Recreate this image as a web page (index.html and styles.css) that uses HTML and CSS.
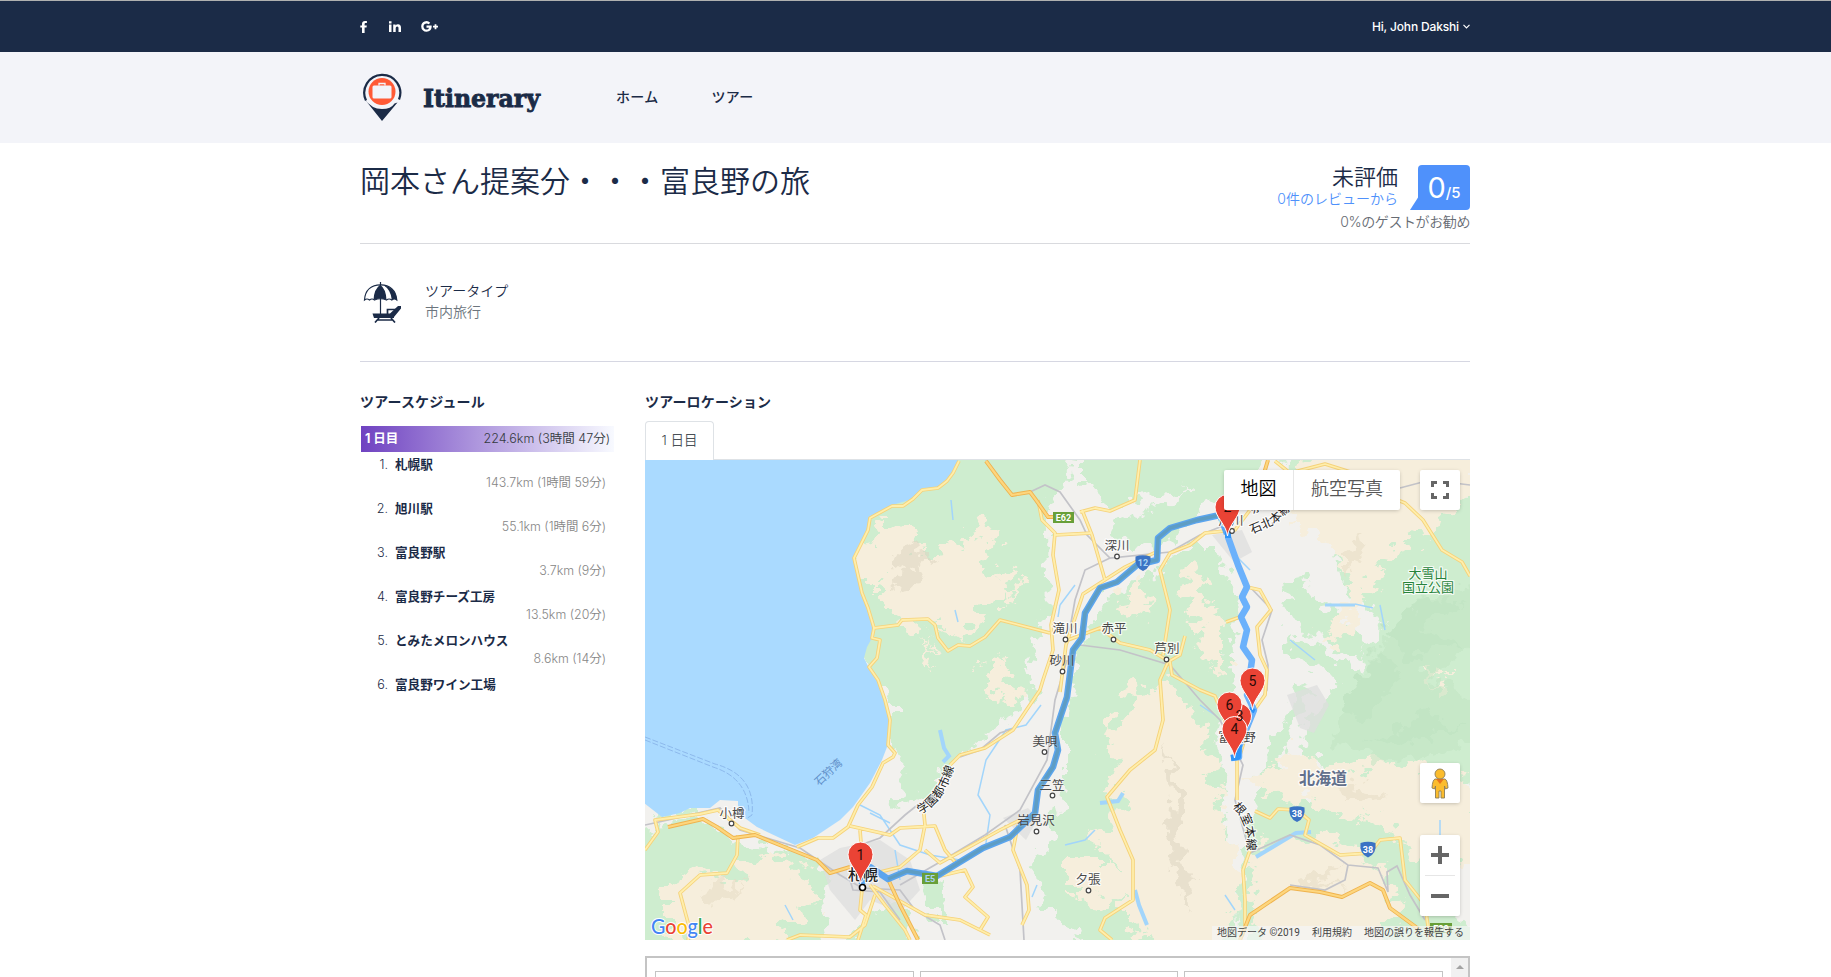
FILE: index.html
```html
<!DOCTYPE html>
<html lang="ja">
<head>
<meta charset="utf-8">
<title>Itinerary</title>
<link rel="stylesheet" href="styles.css">
</head>
<body>
<div class="topbar">
  <div class="container topbar-in">
    <div class="social">
      <svg width="8" height="12" viewBox="0 0 8 12"><path d="M2 12V6.600H.3V4.400H2V3C2 1.100 3.100 0 5 0h1.900v2.100H5.700c-.8 0-1.100.4-1.100 1.100v1.200h2.200l-.3 2.200H4.600V12z"/></svg>
      <svg width="12" height="11" viewBox="0 0 12 11"><path d="M0 3.500h2.500V11H0zM0 .2h2.500v2.200H0zM4.200 3.500h2.400v1c.5-.8 1.300-1.200 2.400-1.200 2.100 0 3 1.300 3 3.500V11H9.500V7.200c0-1.100-.3-1.800-1.300-1.800s-1.500.8-1.500 1.900V11H4.200z"/></svg>
      <svg width="18" height="11" viewBox="0 0 18 11"><path d="M5.500 4.600h5.100c.5 3.400-1.500 6.200-5 6.200A5.300 5.300 0 0 1 .2 5.500 5.300 5.300 0 0 1 9.200 1.700L7.700 3.200C5.800 1.500 2.500 2.600 2.500 5.500c0 3.500 4.700 4.200 5.600 1.200H5.500zM13.600 3.200h1.800v1.600H17v1.800h-1.600v1.600h-1.800V6.600H12V4.800h1.600z"/></svg>
    </div>
    <div class="user">Hi, John Dakshi <svg width="7" height="5" viewBox="0 0 7 5"><path d="M.5.8l3 3 3-3" fill="none" stroke="#fff" stroke-width="1.200"/></svg></div>
  </div>
</div>
<header class="header">
  <div class="container header-in">
    <svg class="pin" width="40" height="48" viewBox="0 0 40 48">
      <path d="M4 27.500A18 18 0 1 1 37 26.500" fill="none" stroke="#1b2b47" stroke-width="2.200"/>
      <path d="M2.500 26q7 10 17.500 10 9 0 12.500-5.500l3-1L20 48z" fill="#1b2b47"/>
      <circle cx="20" cy="18.500" r="13.500" fill="#ff5a36"/>
      <rect x="10.500" y="12.500" width="19" height="13" rx="1.500" fill="#f3f4f9"/>
      <path d="M17 12.500v-2h6v2" fill="none" stroke="#f3f4f9" stroke-width="1.300"/>
    </svg>
    <svg class="brand" width="126" height="50" viewBox="0 0 126 50"><text x="1" y="30" textLength="117" lengthAdjust="spacingAndGlyphs">Itinerary</text></svg>
    <nav class="nav"><a>ホーム</a><a>ツアー</a></nav>
  </div>
</header>
<main class="container">
  <section class="titlebar">
    <h1>岡本さん提案分・・・富良野の旅</h1>
    <div class="rating">
      <div class="rating-row">
        <div class="rating-text"><div class="grade">未評価</div><div class="reviews">0件のレビューから</div></div>
        <div class="score"><svg class="tail" width="9" height="14" viewBox="0 0 9 14"><path d="M9 0L0 14h9z" fill="#4f91fb"/></svg><span class="big">0</span><span class="small">/5</span></div>
      </div>
      <div class="recommend">0%のゲストがお勧め</div>
    </div>
  </section>
  <section class="kind">
    <svg width="40" height="41" viewBox="0 0 40 41">
      <path d="M1.500 18C2 8 8.500 3 17.500 2.800S33 8 33.800 18q-2.500-2-5 0-2.800-2-5.300 0-6-2.500-12 0-2.500-2-5 0-2.500-2-5 0z" fill="#fff" stroke="#1b2b47" stroke-width="1.200"/>
      <path d="M10.500 18Q11 7 17 3v13.500q-3 0-6.500 1.500zM17.500 3q5.500 4 6 15-3-1.500-6-1.500zM21 3.500q12 2.500 12.800 14.500-2.500-2-5 0Q28 8 21 3.500z" fill="#1b2b47"/>
      <path d="M17.500 0v33" stroke="#1b2b47" stroke-width="1.200"/>
      <path d="M9.500 31.500h17.500L35 24h3v2.500L31 35v1H11z" fill="#1b2b47"/>
      <path d="M24.500 32v-4.500H34M16 36l-4 4.500M28 36l4 4.500M14 38h16" fill="none" stroke="#1b2b47" stroke-width="1.700"/>
    </svg>
    <div><div class="kind-name">ツアータイプ</div><div class="kind-value">市内旅行</div></div>
  </section>
  <div class="columns">
    <aside class="schedule">
      <h2>ツアースケジュール</h2>
      <div class="day"><b>1 日目</b><span>224.6km (3時間 47分)</span></div>
      <ol class="stops">
        <li><i>1.</i><b>札幌駅</b><span>143.7km (1時間 59分)</span></li>
        <li><i>2.</i><b>旭川駅</b><span>55.1km (1時間 6分)</span></li>
        <li><i>3.</i><b>富良野駅</b><span>3.7km (9分)</span></li>
        <li><i>4.</i><b>富良野チーズ工房</b><span>13.5km (20分)</span></li>
        <li><i>5.</i><b>とみたメロンハウス</b><span>8.6km (14分)</span></li>
        <li><i>6.</i><b>富良野ワイン工場</b></li>
      </ol>
    </aside>
    <section class="location">
      <h2>ツアーロケーション</h2>
      <div class="tabs"><div class="tab">1 日目</div></div>
      <div class="map">
<svg class="canvas" width="825" height="480" viewBox="645 460 825 480">
  <defs>
    <filter id="rough" x="-5%" y="-5%" width="110%" height="110%"><feTurbulence type="fractalNoise" baseFrequency=".07" numOctaves="3" seed="4"/><feDisplacementMap in="SourceGraphic" scale="30" xChannelSelector="R" yChannelSelector="G"/></filter>
    <filter id="rough2" x="-5%" y="-5%" width="110%" height="110%"><feTurbulence type="fractalNoise" baseFrequency=".05 .07" numOctaves="4" seed="9"/><feDisplacementMap in="SourceGraphic" scale="50" xChannelSelector="R" yChannelSelector="G"/></filter>
    <path id="marker" d="M0 29C-1.500 17-12.500 10-12.500 0a12.500 12.500 0 0 1 25 0C12.500 10 1.500 17 0 29z"/>
    <path id="shield" d="M-7.500-6.500Q0-9 7.500-6.500Q9 4 0 8Q-9 4-7.500-6.500z"/>
    <path id="gakuen" d="M920 814Q944 803 954 767"/>
    <path id="nemuro" d="M1232 807Q1248 820 1247 850"/>
    <path id="sekihoku" d="M1252 534L1275 524L1297 503"/>
    <path id="roads" d="M959 461L953 473 947 481 938 488 922 490 913 499 903 506 892 506 870 518 868 530 854 558 862 593 868 608 874 628 872 638 880 640 877 658 869 667 878 680 885 700 890 720 888 745 895 753 893 757 883 763 872 787 858 805 848 827 833 838 818 838 797 847M874 628L898 625 902 620 928 619 935 625 938 638 948 651 958 645 970 646 985 637 1000 620 1050 633M1038 500L1042 520 1055 533 1053 555 1059 590 1051 625 1053 650 1043 680 1040 690 1013 730 985 748 960 755 950 765M1055 535L1092 533M1140 460L1135 500 1110 511 1095 508 1080 512M1082 510L1092 535 1105 580M1060 692L1066 645 1083 594 1125 567 1160 550M1068 640L1100 628 1120 643 1150 650 1170 662 1172 675 1200 690 1215 696 1237 750 1237 800M1168 662L1160 680 1163 720 1155 750 1130 770 1107 797 1120 830 1133 860 1133 900 1105 918 1100 930 1112 940M1185 636L1180 655 1168 662M1255 811L1270 818 1278 809 1297 810 1309 820 1305 835 1340 855 1370 853 1380 840 1400 838 1405 880 1425 905 1430 940M1250 850L1243 870 1245 900 1245 930M1247 587L1260 590 1271 610 1257 627 1260 655 1267 670 1265 695 1253 712 1240 755M1275 461L1290 473 1325 464 1360 475 1395 478M1385 495L1405 503 1423 520 1442 550 1462 562 1470 576M1163 655L1170 610 1160 570 1170 553 1190 545 1205 533 1235 530 1250 510 1240 500M1226 622L1240 617M645 850L658 832 655 820 700 814 718 810 740 828 760 835M738 835L737 855 727 873 700 875 680 893 690 930 688 940M862 890L860 910 866 915 858 940M875 895L865 925 850 937 800 935 787 940M870 885L885 905 905 930 910 940M850 826L890 835 900 828 935 826 945 850 955 862M860 830L862 855M923 805L925 825 920 850 900 867 880 872M940 876L965 870 973 887 965 897 988 917 980 930M873 886L925 915 960 920 990 935M925 850L940 863 1000 830 1020 820M1018 825L1013 850 1027 885 1029 910 1022 925"/>
    <path id="major" d="M986 461L1000 480 1012 495 1030 492 1036 500 1048 517 1056 517M668 827L703 819 717 827 733 838 755 835 787 848 817 860 830 873 850 867M888 879L900 905 918 940M1240 940L1250 915 1290 888 1320 892 1342 897 1370 883 1383 890 1390 908 1420 930M1262 480L1268 460"/>
  </defs>
  <rect x="645" y="460" width="825" height="480" fill="#f2f1ee"/>
  <g fill="#ceedcf" filter="url(#rough)">
    <path d="M940 440H1075L1068 485 1045 500 1048 615 1030 652 1025 680 1037 690 1015 712 985 738 950 765 925 800 898 805 905 765 895 745 895 700 860 660 868 610 845 557 865 510z"/>
    <path d="M1080 445h120l-20 45-70 15-30-25zM1195 440h75l-15 35-45 30-35 10z"/>
    <path d="M1075 665L1085 640 1103 600 1120 590 1160 570 1185 545 1215 545 1240 600 1230 650 1235 700 1215 740 1225 800 1228 850 1240 960H1120L1070 930 1045 900 1050 840 1065 780 1065 725z"/>
    <path d="M1110 525l60-20 30 5-40 40-40-5zM1120 600l25-5-10 25z"/>
    <path d="M1278 585l25-5 20 25 50 40-10 15-60-30zM1285 632l75 40-15 12-55-30zM1330 520l60-20 90-10v180l-80-30-60-60z"/>
    <path d="M1320 700l40-30 20-40 100-80v230l-90 30-60-20-30-50zM1265 750l25-35 5-30 15 5-25 60-10 50-15 10z"/>
    <path d="M1255 795h70l45-20 110 20v60l-60 30 70 60v20h-230l-25-50 10-60z"/>
    <path d="M640 830l60-10 40 25 60 5 30 20-10 30 10 60H640zM648 810l60 0-20 10zM873 910l25-10 20 50h-80zM920 880l25-5 2 40-20 0zM1035 860l15-10 10 60-15-5z"/>
    <path d="M1280 450h60l20 30-50 30z"/>
  </g>
  <g fill="#f6eedc" filter="url(#rough2)">
    <path d="M878 520l22 0 12 12 6 20 20 0 25-5 15-25 8-4 12 15-10 20-5 20 25 10-5 20-25 12-8 25-22-15-30 5-25-10-15-12 5-25-20 0-22-15 12-18 18-5z"/>
    <path d="M943 600l14 5 3 30-12-10zM985 655l25 5 8 50-15-5-20-25zM925 640l10 20-5 5zM1000 585l18-8 8 10-15 8z"/>
    <path d="M665 885l30-15 35 10 40-30 30 20 25 30-25 20-40 25-60 5-35-20z"/>
    <path d="M1120 590l25-5 5 25-25 5zM1180 570l20 5 25 60 0 45-20-20-15-50z"/>
    <path d="M1130 690l30-10 25 15 25 45 15 90 15 60-15 70h-60l-40-50 0-40-30-30 25-40-10-50z"/>
    <path d="M1075 860l35 0 25 30-30 15-30-5z"/>
    <path d="M1305 440h180v45l-40 30-40 25-35 50-20 40-20 15-8-20 30-20-10-50-50-35z"/>
    <path d="M1295 750l45 20 50-10 90 20v80l-50 10-50-50-50-10-80-20zM1255 845l65-10 60 25 20 50-30 50-100 0-20-50zM1430 665l15 0-10 35z"/>
  </g>
  <g filter="url(#rough)" opacity=".55">
    <path d="M895 555l25-18-5 22 28-5-30 15 5 15-30 5 15-18zM1165 740l18 60-5 40 14 50-5 20-20-60 5-50z" fill="#ddd5c1"/>
    <path d="M700 890l25-15-5 15 30-5-35 20zM1310 870l35-5-30 15 35 5-50 5zM1330 780l60 15-40 5zM1345 555l15-25 5 25-20 25z" fill="#e6dcc5"/>
    <path d="M1330 740l40-80 50-60 60-20v60l-60 40 60 20v40l-90 25z" fill="#c2e5c4"/>
    <path d="M1340 710l40-60 20 20-30 50zM1385 630l45-35 35 10-50 20 50 20-60 15zM1370 740l60-30 30 20-60 15z" fill="#b9dfbc"/>
  </g>
  <g fill="#dedede">
    <path d="M820 860l20-12 40-8 30 20 10 30-20 22-30-12-15 20-25-30zM1212 535l30-5 10 22-18 10zM1287 695l30-10 12 20-15 28-14-5zM1003 818l25-10 10 10-12 22z" opacity=".75"/>
  </g>
  <path d="M640 455H960L953 475 947 482 938 487 922 489 913 499 892 505 870 517 868 527 853 557 862 593 868 610 873 620 874 628 872 638 867 647 864 658 870 670 877 680 885 697 890 717 887 747 882 760 870 783 853 807 840 820 813 838 795 845 780 838 757 827 738 813 738 801 720 800 710 808 690 808 680 813 662 817 640 800z" fill="#aadaff"/>
  <g fill="none" stroke="#8db9ec" stroke-width="1" stroke-dasharray="6 2"><path d="M645 737L715 764Q756 775 752 815L746 819M645 740L713 767Q748 778 749 813"/></g>
  <g fill="none" stroke="#a2d5fb" stroke-width="1.500">
    <path d="M940 730l4 18 5 8-6 6" stroke-width="4"/>
    <path d="M860 805L880 815 900 845 930 855 960 860M870 813l20 10M985 850l5-35-12-20 8-35 20-30 20-5 15-20M955 610l3 12M951 500l2 20M895 850l5 30M785 905l8 15M1060 605l15-20M1060 605l-2 12M1037 885l-5 12"/>
    <path d="M1100 803l18-2 5-8M1256 857l20-12 20-12 15-1M1135 890l4 15 8 20" stroke-width="4"/>
    <path d="M1325 605l30 0" stroke-width="3"/>
    <path d="M1355 604l18 4M1380 605l5 25M1440 850v-30M1065 845l20-5 10-10M1230 550l20 20M1200 705l15 10M1290 640l25 20M1225 895l10 15"/>
  </g>
  <g fill="none" stroke="#c3c3c8" stroke-width="1.700">
    <path d="M645 825L668 820 720 808 740 830 800 848 840 875 862 888 900 890 915 910 940 925 945 940M860 845L880 838 905 815 920 803M960 757L980 750 1000 733 1015 728 1040 690M1067 660L1055 700 1047 760 1020 810 985 835 940 862 900 885M1005 825L1020 870 1024 940M850 880L853 890 880 892 900 920"/>
    <path d="M986 460L1000 478 1012 494 1030 492 1045 485 1060 492 1080 520 1087 535 1110 558 1170 552 1200 535 1225 525M1110 558L1085 570 1075 600 1068 640M1080 645L1120 650 1170 665 1200 700 1220 720 1243 765 1235 800 1250 853 1290 835 1320 845 1348 865 1345 880 1325 890 1290 885M1348 865L1378 868 1388 892 1387 872 1397 866 1410 895 1425 920M1250 587L1272 610 1262 640 1268 665 1267 690 1245 725M1400 488L1430 480 1470 485"/>
  </g>
  <g fill="none" stroke-linejoin="round">
    <use href="#roads" stroke="#f5d27a" stroke-width="3.600"/>
    <use href="#roads" stroke="#ffeeab" stroke-width="1.800"/>
    <use href="#major" stroke="#efb34e" stroke-width="4"/>
    <use href="#major" stroke="#fdd67e" stroke-width="2.200"/>
  </g>
  <g fill="none" stroke-linejoin="round">
    <path d="M862 884L862 876 870 867 888 879 907 871 937 876 955 865 983 848 1010 837 1035 813 1038 790 1053 767 1058 750 1055 733 1067 697 1073 650 1082 638 1085 613 1100 588 1117 582 1137 565 1157 560 1158 538 1170 528 1197 520 1220 515 1227 534" stroke="#5ba5ee" stroke-width="6.500"/>
    <path d="M888 879L907 871 937 876 955 865 983 848 1010 837 1035 813 1038 790 1053 767 1058 750 1055 733 1067 697 1073 650 1082 638 1085 613 1100 588 1117 582 1137 565 1157 560 1158 538 1170 528 1197 520 1220 515" stroke="#5e9dc4" stroke-width="3.500"/>
    <path d="M1228 537L1238 565 1247 587 1242 597 1247 607 1241 617 1247 630 1243 647 1252 660 1247 695 1254 710 1239 747 1239 757 1231 758" stroke="#6bb1fb" stroke-width="6.500"/>
    <path d="M1239 745L1238 757 1231 758M1251 712L1253 708M1228 532V538" stroke="#2f94f8" stroke-width="6"/>
  </g>
  <g class="signs">
    <rect x="1053" y="512" width="21" height="11"/><text x="1063.500" y="521">E62</text>
    <rect x="922" y="873" width="16" height="11"/><text x="930" y="882" class="dim">E5</text>
    <rect x="1430" y="923" width="22" height="10"/><text x="1441" y="932">E38</text>
    <use href="#shield" x="1143" y="563"/><text x="1143" y="566" class="dim">12</text>
    <use href="#shield" x="1297" y="814"/><text x="1297" y="817">38</text>
    <use href="#shield" x="1368" y="849.500"/><text x="1368" y="852.500">38</text>
  </g>
  <g class="towns">
    <text x="1117" y="550">深川</text><text x="1065" y="633">滝川</text><text x="1062" y="665" class="under">砂川</text><text x="1114" y="633">赤平</text><text x="1167" y="653">芦別</text>
    <text x="1045" y="746" class="under">美唄</text><text x="1052" y="790" class="under">三笠</text><text x="1036" y="825" class="under">岩見沢</text><text x="1088" y="884">夕張</text><text x="732" y="818">小樽</text>
    <text x="1231" y="525">旭川</text><text x="1237" y="742">富良野</text><text x="863" y="880" class="city">札幌</text>
    <text x="1323" y="784" class="pref">北海道</text>
    <text x="1428" y="578" class="park">大雪山</text><text x="1428" y="591.500" class="park">国立公園</text>
    <text x="0" y="0" class="bay" transform="translate(831 775) rotate(-43)">石狩湾</text>
    <text class="rail"><textPath href="#gakuen" startOffset="0">学園都市線</textPath></text>
    <text class="rail"><textPath href="#nemuro" startOffset="0">根室本線</textPath></text>
    <text class="rail"><textPath href="#sekihoku" startOffset="0">石北本線</textPath></text>
    <text x="1253" y="514" class="rail" transform="rotate(-30 1253 514)">宗谷</text>
  </g>
  <g fill="#fff" stroke="#444" stroke-width="1.200"><circle cx="1117" cy="556.500" r="2.300"/><circle cx="1065.500" cy="639.500" r="2.300"/><circle cx="1062.500" cy="671.500" r="2.300"/><circle cx="1113.500" cy="639.500" r="2.300"/><circle cx="1166.500" cy="659.500" r="2.300"/><circle cx="1044.500" cy="752" r="2.300"/><circle cx="1052.500" cy="795.500" r="2.300"/><circle cx="1036.500" cy="831.500" r="2.300"/><circle cx="1088.500" cy="890.500" r="2.300"/><circle cx="731.500" cy="823.500" r="2.300"/><circle cx="1232" cy="531" r="2.300"/><circle cx="862.500" cy="887.500" r="3" stroke="#000" stroke-width="1.600"/></g>
  <g class="markers">
    <use href="#marker" x="860.500" y="854.500"/><text x="860.500" y="860">1</text>
    <use href="#marker" x="1227.500" y="507"/><text x="1227.500" y="512">2</text>
    <use href="#marker" x="1252.500" y="680.500"/><text x="1252.500" y="686">5</text>
    <use href="#marker" x="1239" y="716"/>
    <use href="#marker" x="1229.500" y="704.500"/><text x="1229.500" y="710">6</text>
    <use href="#marker" x="1234.500" y="729"/><text x="1234.500" y="734">4</text>
    <text x="1239.500" y="721">3</text>
  </g>
  <text class="google" x="651" y="934" textLength="62" lengthAdjust="spacingAndGlyphs"><tspan fill="#4285f4">G</tspan><tspan fill="#ea4335">o</tspan><tspan fill="#fbbc05">o</tspan><tspan fill="#4285f4">g</tspan><tspan fill="#34a853">l</tspan><tspan fill="#ea4335">e</tspan></text>
</svg>
        <div class="maptype"><span class="on">地図</span><span>航空写真</span></div>
        <div class="ctl full"><svg width="18" height="18" viewBox="0 0 18 18"><path d="M1.500 6V1.500H6M12 1.500h4.500V6M16.500 12v4.500H12M6 16.500H1.500V12" fill="none" stroke="#666" stroke-width="3"/></svg></div>
        <div class="ctl pegman"><svg width="18" height="31" viewBox="0 0 18 31"><path d="M4 11h10q2.500 1 3 9l-2.500 1-1-3v12H10v-7H8v7H4.500V18l-1 3L1 20q.5-8 3-9z" fill="#fbbc2d" stroke="#8b7d58" stroke-width=".9"/><path d="M5 11l4 5 4-5z" fill="#e8731c"/><circle cx="9" cy="6" r="5" fill="#fbbc2d" stroke="#8b7d58" stroke-width=".9"/></svg></div>
        <div class="ctl zoom"><svg width="18" height="18" viewBox="0 0 18 18"><path d="M0 9h18M9 0v18" stroke="#666" stroke-width="4"/></svg><i></i><svg width="18" height="18" viewBox="0 0 18 18"><path d="M0 9h18" stroke="#666" stroke-width="4"/></svg></div>
        <div class="credit"><span>地図データ ©2019</span><span>利用規約</span><span>地図の誤りを報告する</span></div>
      </div>
      <div class="panel">
        <div class="cards"><div></div><div></div><div></div></div>
        <div class="scroll"><svg width="8" height="4" viewBox="0 0 8 4"><path d="M0 4l4-4 4 4z" fill="#a3a3a3"/></svg></div>
      </div>
    </section>
  </div>
</main>
</body>
</html>
```
FILE: styles.css
```css
* { box-sizing: border-box; }
html, body { height: 977px; overflow: hidden; }
body { margin: 0; background: #fff; color: #1b2b47; font: 350 14px/21px Inter, "Noto Sans CJK JP", sans-serif; }
.container { width: 1110px; margin: 0 auto 0 360px; }
h1, h2, ol { margin: 0; padding: 0; }
svg { display: block; flex: none; }

.topbar { height: 52px; background: #1b2b47; border-top: 1px solid #b0b1b0; }
.topbar-in { display: flex; justify-content: space-between; align-items: center; height: 51px; }
.social { display: flex; align-items: center; gap: 20px; fill: #fff; }
.social svg:nth-child(2) { margin-left: 1px; }
.user { display: flex; align-items: center; gap: 4px; color: #fff; font-size: 12px; font-weight: 500; letter-spacing: -.15px; }

.header { height: 91px; background: #f3f4f9; }
.header-in { display: flex; height: 91px; align-items: flex-start; }
.pin { margin: 21px 0 0 2px; }
.brand { margin: 25px 0 0 20px; }
.brand text { font: 700 25px "DejaVu Serif", serif; fill: #1b2b47; stroke: #1b2b47; stroke-width: .9px; }
.nav { display: flex; gap: 53px; margin: 34px 0 0 68px; font-size: 14px; font-weight: 500; letter-spacing: .3px; }

.titlebar { display: flex; justify-content: space-between; height: 101px; border-bottom: 1px solid #d9dade; }
h1 { margin-top: 15px; font: 350 30px/42px "Noto Sans CJK JP", sans-serif; }
.rating { padding-top: 22px; text-align: right; }
.rating-row { display: flex; justify-content: flex-end; height: 45px; }
.rating-text { margin-right: 20px; }
.grade { font-size: 22px; line-height: 24px; }
.reviews { color: #4f91fb; line-height: 20px; letter-spacing: 0; }
.score { position: relative; width: 52px; height: 45px; border-radius: 4px 4px 4px 0; background: #4f91fb; color: #fff; display: flex; justify-content: center; align-items: baseline; line-height: 45px; }
.tail { position: absolute; left: -8px; bottom: 0; }
.big { font-size: 29px; font-weight: 400; }
.small { font-size: 15px; font-weight: 500; }
.recommend { color: #666b73; line-height: 24px; letter-spacing: -.4px; }

.kind { display: flex; gap: 22px; height: 118px; padding: 36px 0 0 3px; border-bottom: 1px solid #d6d7e2; }
.kind svg { margin-top: 2px; }
.kind-value { color: #6c757d; }

.columns { display: flex; gap: 31px; padding-top: 29px; }
h2 { font-size: 14px; line-height: 22px; font-weight: 600; letter-spacing: .15px; }
.schedule { width: 254px; }
.day { display: flex; justify-content: space-between; align-items: center; width: 253px; height: 26px; margin: 13px 0 0 1px; padding: 0 4px 2px; background: linear-gradient(90deg, #6f42c1, #f8faff); color: #343a40; font-size: 12.500px; }
.day b { color: #fff; font-weight: 700; }
.stops { list-style: none; width: 246px; font-size: 12.600px; }
.stops li { display: grid; grid-template-columns: 28px 1fr; grid-template-rows: 19px 17px; column-gap: 7px; height: 44px; padding-top: 3px; line-height: 19px; }
.stops i { font-style: normal; text-align: right; }
.stops b { font-weight: 600; }
.stops span { grid-column: 1 / 3; margin-top: 1px; text-align: right; color: #868686; font-size: 12.400px; line-height: 15px; }

.location { width: 825px; }
.tabs { display: flex; height: 47px; padding-top: 8px; border-bottom: 1px solid #dee2e6; }
.tab { width: 69px; height: 39px; border: 1px solid #dee2e6; border-bottom: 0; border-radius: 4px 4px 0 0; background: #fff; color: #495057; text-align: center; line-height: 37px; font-size: 13.500px; }
.map { position: relative; height: 480px; overflow: hidden; font-family: Roboto, "Noto Sans CJK JP", sans-serif; }
.towns text { font: 400 12.500px "Noto Sans CJK JP", sans-serif; text-anchor: middle; fill: #4a4a4a; stroke: #fff; stroke-width: 2.500px; stroke-opacity: .8; paint-order: stroke; stroke-linejoin: round; }
.towns .under { stroke-opacity: .15; }
.towns .city { font-size: 15px; font-weight: 500; fill: #222; }
.towns .pref { font-size: 16px; font-weight: 700; fill: #63718c; }
.towns .park { font-size: 13px; fill: #26833a; }
.towns .bay { font-size: 11px; fill: #5f8fc9; stroke: none; }
.towns .rail { font-size: 12px; fill: #222; text-anchor: start; }
.signs rect { fill: #689f38; }
.signs use { fill: #3b73c4; }
.signs text { font: 700 9px Roboto, sans-serif; text-anchor: middle; fill: #fff; }
.signs .dim { fill: #a9d3f5; }
.markers use { fill: #ea4335; stroke: #fff; stroke-width: 1px; }
.markers text { font: 400 14px Roboto, sans-serif; text-anchor: middle; fill: #2b0b08; }
.google { font: 500 22px Lato, sans-serif; stroke: #fff; stroke-width: 2px; paint-order: stroke; }
.maptype, .ctl { position: absolute; background: #fff; border-radius: 2px; box-shadow: 0 1px 4px -1px rgba(0, 0, 0, .3); }
.maptype { left: 579px; top: 10px; display: flex; width: 176px; height: 40px; font-size: 18px; line-height: 37px; color: #565656; text-align: center; }
.maptype span { flex: 1; }
.maptype .on { flex: none; width: 70px; color: #000; border-right: 1px solid #e6e6e6; }
.ctl { right: 10px; width: 40px; display: flex; align-items: center; justify-content: center; }
.full { top: 10px; height: 40px; }
.pegman { top: 303px; height: 40px; }
.zoom { top: 375px; height: 81px; flex-direction: column; gap: 11px; }
.zoom i { width: 30px; height: 1px; background: #e6e6e6; }
.credit { position: absolute; right: 0; bottom: 0; display: flex; justify-content: space-between; width: 258px; height: 14px; padding: 0 6px 0 5px; background: rgba(245, 245, 245, .7); color: #444; font-size: 10px; font-weight: 400; line-height: 14px; }
.panel { display: flex; justify-content: space-between; height: 40px; margin-top: 16px; border: 2px solid #c4c4c4; }
.cards { display: flex; gap: 6px; padding: 13px 0 0 8px; }
.cards div { width: 258.700px; height: 40px; border: 1px solid #c4c4c4; }
.scroll { width: 17px; background: #f1f1f1; display: flex; justify-content: center; padding-top: 7px; }
```
